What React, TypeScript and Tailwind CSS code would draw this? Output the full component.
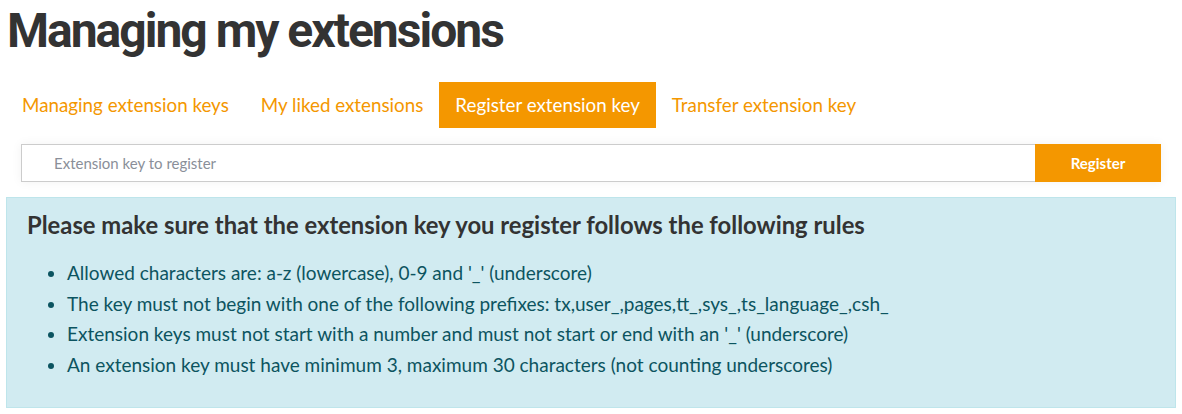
import { useState } from "react";

const tabs = [
  "Managing extension keys",
  "My liked extensions",
  "Register extension key",
  "Transfer extension key",
];

const rules = [
  "Allowed characters are: a-z (lowercase), 0-9 and '_' (underscore)",
  "The key must not begin with one of the following prefixes: tx,user_,pages,tt_,sys_,ts_language_,csh_",
  "Extension keys must not start with a number and must not start or end with an '_' (underscore)",
  "An extension key must have minimum 3, maximum 30 characters (not counting underscores)",
];

export default function App() {
  const [active, setActive] = useState(2);
  const [extKey, setExtKey] = useState("");

  return (
    <div className="w-[1182px] h-[414px] overflow-hidden bg-white font-['Lato',sans-serif] text-[#333]">
      <h1 className="pl-[7px] pt-[3px] h-[82px] text-[48px] leading-[56px] font-bold font-['Roboto',sans-serif] tracking-[-2px] text-[#333]">
        Managing my extensions
      </h1>

      <ul className="flex pl-[6px] h-[46px]">
        {tabs.map((t, i) => (
          <li key={t}>
            <button
              onClick={() => setActive(i)}
              className={
                i === active
                  ? "h-[46px] px-4 text-[18.8px] bg-[#f49700] text-white"
                  : "h-[46px] px-4 text-[18.8px] text-[#f49700]"
              }
            >
              {t}
            </button>
          </li>
        ))}
      </ul>

      <form
        className="flex ml-[21px] mr-[21px] mt-[16px] h-[38px] shadow-[0_0_10px_rgba(0,0,0,0.06)]"
        onSubmit={(e) => e.preventDefault()}
      >
        <input
          className="flex-1 min-w-0 border border-[#ccc] border-r-0 pl-[32px] text-[15px] outline-none placeholder:text-[#8a8f99]"
          placeholder="Extension key to register"
          value={extKey}
          onChange={(e) => setExtKey(e.target.value)}
        />
        <button className="w-[126px] bg-[#f49700] text-white text-[15px] font-bold">
          Register
        </button>
      </form>

      <div className="ml-[6px] mr-[6px] mt-[15px] h-[211px] bg-[#d1ebf1] border border-[#bee5eb] px-[20px] pt-[12px]">
        <h3 className="text-[23.8px] leading-[30px] font-bold text-[#333]">
          Please make sure that the extension key you register follows the following rules
        </h3>
        <ul className="mt-[18px] list-disc pl-[40px] text-[#0c5460] text-[19px] leading-[30.5px]">
          {rules.map((r) => (
            <li key={r}>{r}</li>
          ))}
        </ul>
      </div>
    </div>
  );
}
